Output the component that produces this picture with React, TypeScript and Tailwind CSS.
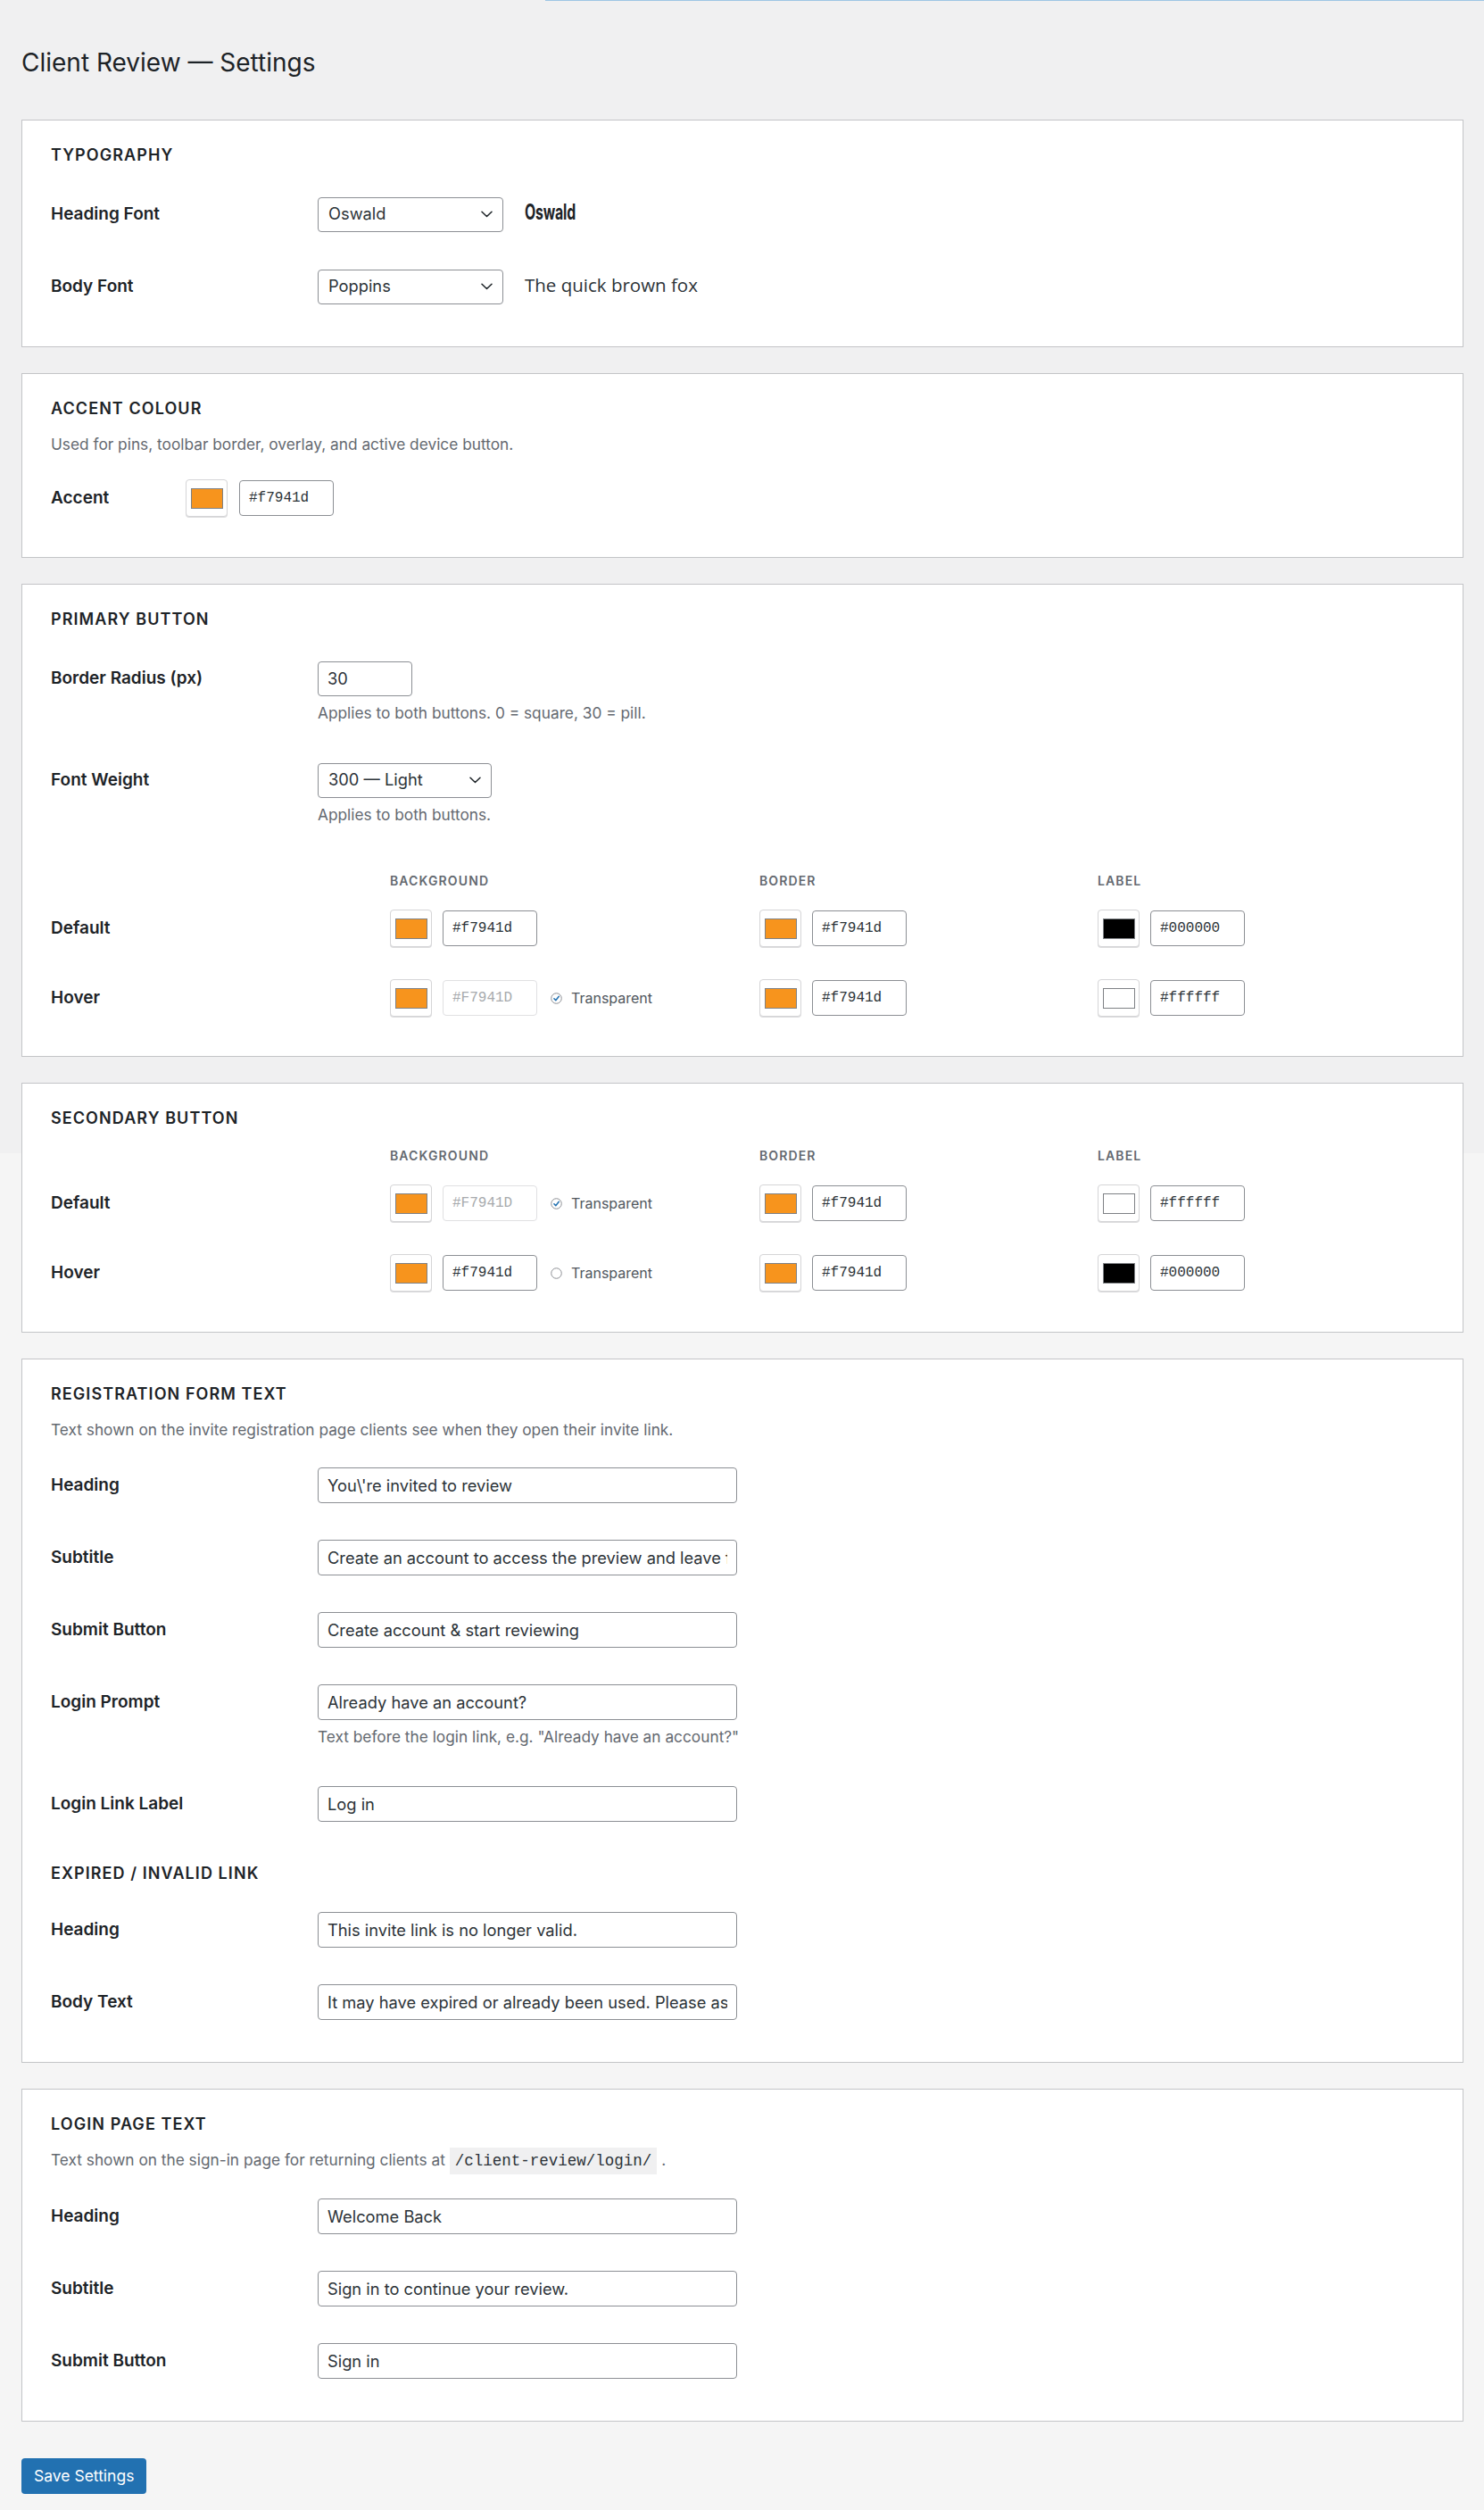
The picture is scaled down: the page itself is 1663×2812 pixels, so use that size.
import React from "react";

const ORANGE = "#f7941d";

type Cell = { color: string; hex: string; transparent?: boolean };
type ColorRow = { label: string; bg: Cell; border: Cell; text: Cell };

const PRIMARY_ROWS: ColorRow[] = [
  {
    label: "Default",
    bg: { color: ORANGE, hex: "#f7941d" },
    border: { color: ORANGE, hex: "#f7941d" },
    text: { color: "#000000", hex: "#000000" },
  },
  {
    label: "Hover",
    bg: { color: ORANGE, hex: "#F7941D", transparent: true },
    border: { color: ORANGE, hex: "#f7941d" },
    text: { color: "#ffffff", hex: "#ffffff" },
  },
];

const SECONDARY_ROWS: ColorRow[] = [
  {
    label: "Default",
    bg: { color: ORANGE, hex: "#F7941D", transparent: true },
    border: { color: ORANGE, hex: "#f7941d" },
    text: { color: "#ffffff", hex: "#ffffff" },
  },
  {
    label: "Hover",
    bg: { color: ORANGE, hex: "#f7941d", transparent: false },
    border: { color: ORANGE, hex: "#f7941d" },
    text: { color: "#000000", hex: "#000000" },
  },
];

function Card({ children, className = "" }: { children: React.ReactNode; className?: string }) {
  return (
    <section className={`bg-white border border-[#c3c4c7] px-[32px] pt-[27px] pb-[26px] ${className}`}>
      {children}
    </section>
  );
}

function SectionTitle({ children, className = "" }: { children: React.ReactNode; className?: string }) {
  return (
    <h2
      className={`text-[18px] leading-[24px] font-semibold uppercase tracking-[0.06em] text-[#1d2327] ${className}`}
    >
      {children}
    </h2>
  );
}

function Desc({ children, className = "" }: { children: React.ReactNode; className?: string }) {
  return <p className={`text-[17.3px] leading-[24px] text-[#646970] ${className}`}>{children}</p>;
}

function Chevron() {
  return (
    <svg width="13" height="8" viewBox="0 0 13 8" fill="none">
      <path d="M1 1.25 6.5 6.5 12 1.25" stroke="#1d2327" strokeWidth="1.5" strokeLinecap="round" strokeLinejoin="round" />
    </svg>
  );
}

function FakeSelect({ value, width }: { value: string; width: string }) {
  return (
    <div
      className={`${width} h-[39px] flex items-center justify-between pl-[11px] pr-[11px] border border-[#8c8f94] rounded-[4px] bg-white text-[18.3px] text-[#2c3338]`}
    >
      <span>{value}</span>
      <Chevron />
    </div>
  );
}

function TextInput({ value }: { value: string }) {
  return (
    <input
      type="text"
      defaultValue={value}
      className="w-[470px] h-[40px] px-[10px] border border-[#8c8f94] rounded-[4px] bg-white text-[18.3px] text-[#2c3338] outline-none"
    />
  );
}

function Row({
  label,
  children,
  desc,
}: {
  label: string;
  children: React.ReactNode;
  desc?: string;
}) {
  return (
    <div className="flex pt-[20px] pb-[21px]">
      <div className="w-[299px] shrink-0 h-[40px] flex items-center text-[19px] font-semibold text-[#1d2327]">
        {label}
      </div>
      <div>
        <div className="flex items-center gap-[24px] h-[40px]">{children}</div>
        {desc && <p className="mt-[5px] text-[17.3px] leading-[28px] text-[#646970]">{desc}</p>}
      </div>
    </div>
  );
}

function RoundCheck({ checked }: { checked: boolean }) {
  return (
    <svg width="13" height="13" viewBox="0 0 13 13" fill="none">
      <circle cx="6.5" cy="6.5" r="5.75" fill="white" stroke="#8c8f94" strokeWidth="1" />
      {checked && (
        <path d="M3.9 6.7 5.8 8.7 9.3 4.3" stroke="#2271b1" strokeWidth="1.5" strokeLinecap="round" strokeLinejoin="round" />
      )}
    </svg>
  );
}

function Swatch({ color }: { color: string }) {
  return (
    <div className="w-[47px] h-[42px] shrink-0 flex items-center justify-center rounded-[4px] border border-[#d5d5d7] bg-white shadow-[0_1px_0_#dcdcde]">
      <div className="w-[36px] h-[23px] border border-[#7e8185]" style={{ backgroundColor: color }} />
    </div>
  );
}

function ColorField({ cell }: { cell: Cell }) {
  const disabled = cell.transparent === true;
  return (
    <div className="flex items-center">
      <Swatch color={cell.color} />
      <div
        className={`ml-[12px] w-[106px] h-[40px] flex items-center px-[10px] rounded-[4px] border font-['Liberation_Mono',monospace] text-[16px] ${
          disabled ? "border-[#e0e0e2] text-[#a7aaad]" : "border-[#8c8f94] text-[#2c3338]"
        }`}
      >
        {cell.hex}
      </div>
      {cell.transparent !== undefined && (
        <label className="ml-[15px] flex items-center gap-[10px] text-[16px] text-[#50575e]">
          <RoundCheck checked={cell.transparent} />
          Transparent
        </label>
      )}
    </div>
  );
}

function ColorTable({ rows, className = "" }: { rows: ColorRow[]; className?: string }) {
  const head = "h-[30px] flex items-center text-[14px] font-semibold uppercase tracking-[0.08em] text-[#646970]";
  return (
    <div className={`grid grid-cols-[380px_414px_379px_1fr] ${className}`}>
      <div className="h-[30px]" />
      <div className={head}>Background</div>
      <div className={head}>Border</div>
      <div className={head}>Label</div>
      {rows.map((r) => (
        <React.Fragment key={r.label}>
          <div className="h-[78px] flex items-center text-[19px] font-semibold text-[#1d2327]">{r.label}</div>
          <div className="h-[78px] flex items-center">
            <ColorField cell={r.bg} />
          </div>
          <div className="h-[78px] flex items-center">
            <ColorField cell={r.border} />
          </div>
          <div className="h-[78px] flex items-center">
            <ColorField cell={r.text} />
          </div>
        </React.Fragment>
      ))}
    </div>
  );
}

export default function App() {
  return (
    <div className="min-h-[2812px] pl-[24px] pr-[23px] pb-[19px] bg-[linear-gradient(to_bottom,#f0f0f1_1292px,#f5f5f5_1292px)] font-['Inter','Noto_Sans',sans-serif] text-[#1d2327]">
      <div className="h-px ml-[587px] -mr-[23px] bg-[#9ec6e4]" />

      <h1 className="pt-[49px] text-[28px] leading-[40px] font-normal text-[#1d2327]">
        Client Review — Settings
      </h1>

      <Card className="mt-[44px]">
        <SectionTitle>Typography</SectionTitle>
        <div className="mt-[14px]">
          <Row label="Heading Font">
            <FakeSelect value="Oswald" width="w-[208px]" />
            <span className="inline-block origin-left scale-x-[0.66] font-bold text-[24px] tracking-[-0.01em] text-[#1d2327] -mt-[4px]">
              Oswald
            </span>
          </Row>
          <Row label="Body Font">
            <FakeSelect value="Poppins" width="w-[208px]" />
            <span className="font-['Open_Sans',sans-serif] text-[20.5px] text-[#2c3338] -mt-[3px]">
              The quick brown fox
            </span>
          </Row>
        </div>
      </Card>

      <Card className="mt-[29px]">
        <SectionTitle>Accent Colour</SectionTitle>
        <Desc className="mt-[16px]">Used for pins, toolbar border, overlay, and active device button.</Desc>
        <div className="mt-[27px] mb-[19px] flex items-center">
          <div className="w-[151px] shrink-0 text-[19px] font-semibold">Accent</div>
          <Swatch color={ORANGE} />
          <div className="ml-[13px] w-[106px] h-[40px] flex items-center px-[10px] rounded-[4px] border border-[#8c8f94] font-['Liberation_Mono',monospace] text-[16px] text-[#2c3338]">
            #f7941d
          </div>
        </div>
      </Card>

      <Card className="mt-[29px]">
        <SectionTitle>Primary Button</SectionTitle>
        <div className="mt-[14px]">
          <Row label="Border Radius (px)" desc="Applies to both buttons. 0 = square, 30 = pill.">
            <input
              type="number"
              defaultValue={30}
              className="w-[106px] h-[39px] px-[10px] border border-[#8c8f94] rounded-[4px] text-[18.3px] text-[#2c3338] outline-none [appearance:textfield] [&::-webkit-inner-spin-button]:appearance-none"
            />
          </Row>
          <Row label="Font Weight" desc="Applies to both buttons.">
            <FakeSelect value="300 — Light" width="w-[195px]" />
          </Row>
        </div>
        <ColorTable rows={PRIMARY_ROWS} className="mt-[23px]" />
      </Card>

      <Card className="mt-[29px]">
        <SectionTitle>Secondary Button</SectionTitle>
        <ColorTable rows={SECONDARY_ROWS} className="mt-[14px] mb-[1px]" />
      </Card>

      <Card className="mt-[29px]">
        <SectionTitle>Registration Form Text</SectionTitle>
        <Desc className="mt-[16px]">
          Text shown on the invite registration page clients see when they open their invite link.
        </Desc>
        <div className="mt-[10px]">
          <Row label="Heading">
            <TextInput value="You\'re invited to review" />
          </Row>
          <Row label="Subtitle">
            <TextInput value="Create an account to access the preview and leave feedback." />
          </Row>
          <Row label="Submit Button">
            <TextInput value="Create account & start reviewing" />
          </Row>
          <Row label="Login Prompt" desc={'Text before the login link, e.g. "Already have an account?"'}>
            <TextInput value="Already have an account?" />
          </Row>
          <Row label="Login Link Label">
            <TextInput value="Log in" />
          </Row>
        </div>
        <SectionTitle className="mt-[25px]">Expired / Invalid Link</SectionTitle>
        <div className="mt-[11px]">
          <Row label="Heading">
            <TextInput value="This invite link is no longer valid." />
          </Row>
          <Row label="Body Text">
            <TextInput value="It may have expired or already been used. Please ask for a new invite." />
          </Row>
        </div>
      </Card>

      <Card className="mt-[29px]">
        <SectionTitle>Login Page Text</SectionTitle>
        <Desc className="mt-[16px]">
          Text shown on the sign-in page for returning clients at{" "}
          <code className="px-[6px] py-[5px] bg-[#f0f0f1] text-[#2c3338] font-['Liberation_Mono',monospace] text-[17.5px]">
            /client-review/login/
          </code>{" "}
          .
        </Desc>
        <div className="mt-[10px]">
          <Row label="Heading">
            <TextInput value="Welcome Back" />
          </Row>
          <Row label="Subtitle">
            <TextInput value="Sign in to continue your review." />
          </Row>
          <Row label="Submit Button">
            <TextInput value="Sign in" />
          </Row>
        </div>
      </Card>

      <button className="mt-[41px] h-[40px] px-[14px] rounded-[4px] bg-[#2271b1] text-white text-[17.5px]">
        Save Settings
      </button>
    </div>
  );
}
